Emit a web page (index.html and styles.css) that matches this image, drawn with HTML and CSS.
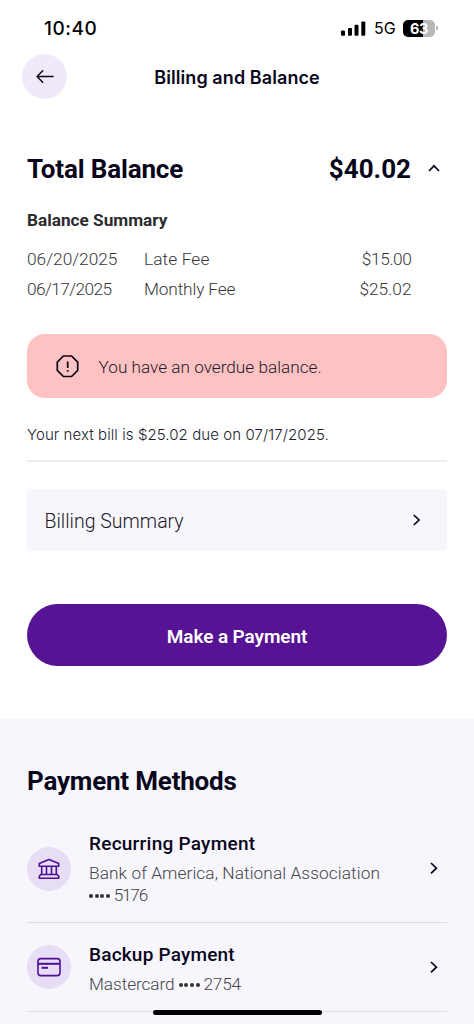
FILE: index.html
```html
<!DOCTYPE html>
<html lang="en">
<head>
<meta charset="utf-8">
<title>Billing and Balance</title>
<link rel="stylesheet" href="styles.css">
</head>
<body>
<div class="screen">
  <div class="status">
    <span class="time">10:40</span>
    <div class="indicators">
      <svg class="signal" width="25" height="15" viewBox="0 0 25 15"><rect x="0" y="9.5" width="4" height="5.2" rx="1"/><rect x="7" y="7" width="4" height="7.7" rx="1"/><rect x="13.5" y="3.8" width="4" height="10.9" rx="1"/><rect x="20.3" y="0.5" width="4" height="14.2" rx="1"/></svg>
      <span class="network">5G</span>
      <div class="battery"><span class="charge">63</span></div>
      <svg class="tip" width="3" height="6" viewBox="0 0 3 6"><path d="M0 0.5Q2.4 1.2 2.4 3T0 5.5Z"/></svg>
    </div>
  </div>
  <header class="nav">
    <button class="back" aria-label="Back"><svg width="20" height="16" viewBox="0 0 20 16"><path d="M18 7.5H2M7.7 1.8L2 7.5L7.7 13.2"/></svg></button>
    <h1 class="title">Billing and Balance</h1>
  </header>
  <main class="balance">
    <div class="total">
      <h2 class="heading total-label">Total Balance</h2>
      <span class="heading amount">$40.02</span>
      <svg class="caret" width="14" height="10" viewBox="0 0 14 10"><path d="M2 7L7 1.8L12 7"/></svg>
    </div>
    <h3 class="subheading">Balance Summary</h3>
    <div class="fees">
      <div class="fee"><span class="date">06/20/2025</span><span class="name late">Late Fee</span><span class="price narrow">$15.00</span></div>
      <div class="fee"><span class="date narrower">06/17/2025</span><span class="name monthly">Monthly Fee</span><span class="price">$25.02</span></div>
    </div>
    <div class="alert">
      <svg width="24" height="24" viewBox="0 0 24 24"><path d="M7.4 2H15.6L21.7 8.1V16.4L15.6 22.5H7.4L1.3 16.4V8.1Z"/><path d="M11.7 7.5V14M11.7 16V17.7"/></svg>
      <span>You have an overdue balance.</span>
    </div>
    <p class="next">Your next bill is $25.02 due on 07/17/2025.</p>
    <div class="summary"><span>Billing Summary</span><svg width="10" height="14" viewBox="0 0 10 14"><path d="M1.8 2L7 7L1.8 12"/></svg></div>
    <button class="pay">Make a Payment</button>
  </main>
  <section class="methods">
    <h2 class="heading methods-title">Payment Methods</h2>
    <div class="method recurring">
      <div class="icon"><svg width="24" height="24" viewBox="0 0 24 24"><path d="M2.3 9.2V6.5L12 2.5L21.7 6.5V9.2ZM4.7 9.2V17.5M9.5 9.2V17.5M14.5 9.2V17.5M19.3 9.2V17.5M2.3 21.3V19.3L3.8 17.5H20.2L21.7 19.3V21.3Z"/></svg></div>
      <div class="detail"><h3 class="kind">Recurring Payment</h3><p class="info"><span class="bank">Bank of America, National Association</span><br><b class="dots"><i></i><i></i><i></i><i></i></b><span class="num account">5176</span></p></div>
      <svg class="go" width="10" height="14" viewBox="0 0 10 14"><path d="M2 2L7.4 7.2L2 12.4"/></svg>
    </div>
    <div class="method backup">
      <div class="icon"><svg width="24" height="24" viewBox="0 0 24 24"><rect x="1" y="3.6" width="22" height="17" rx="2.8"/><path class="stripe" d="M1 8.8H23"/><path class="stripe" d="M4.5 12.8H11"/></svg></div>
      <div class="detail"><h3 class="kind">Backup Payment</h3><p class="info"><span class="card">Mastercard</span> <b class="dots"><i></i><i></i><i></i><i></i></b><span class="num">2754</span></p></div>
      <svg class="go" width="10" height="14" viewBox="0 0 10 14"><path d="M2 2L7.4 7.2L2 12.4"/></svg>
    </div>
  </section>
  <div class="home-bar"></div>
</div>
</body>
</html>
```
FILE: styles.css
```css
* { box-sizing: border-box; margin: 0; padding: 0; }
body { background: #fff; color: #09061c; font-family: Roboto, "Liberation Sans", sans-serif; }
button { border: 0; font: inherit; }
svg { display: block; flex: none; }
path { fill: none; stroke: #09061c; stroke-width: 1.7; }
.screen { position: relative; width: 474px; height: 1024px; overflow: hidden; display: flex; flex-direction: column; }
.status { height: 54px; padding: 16px 36px 14px 44px; display: flex; justify-content: space-between; align-items: center; font-family: Inter, sans-serif; color: #000; }
.time { font-size: 19px; font-weight: 500; letter-spacing: 0.5px; }
.indicators { display: flex; align-items: center; }
.signal { margin-right: 8px; }
.network { font-size: 16px; width: 29px; }
.battery { width: 32px; height: 17px; border-radius: 5px; background: linear-gradient(90deg, #000 63%, #b8b8b8 63%); color: #fff; text-align: center; font-size: 14.5px; font-weight: 700; line-height: 17px; letter-spacing: -0.3px; }
.tip { margin: 0 -1px 0 1px; }
.tip path { stroke: none; fill: #b8b8b8; }
.nav { height: 45px; padding: 0 22px; display: grid; grid-template-columns: 44px 1fr 44px; }
.back { width: 45px; height: 45px; border-radius: 50%; background: #f0eaf8; display: grid; place-items: center; }
.back path { stroke-width: 1.5; stroke-linecap: round; stroke-linejoin: round; }
.title { font: 600 18px/47px Inter, sans-serif; text-align: center; letter-spacing: 0.08px; }
.balance { height: 620px; padding: 52px 27px 0; }
.heading { font-size: 26px; font-weight: 700; line-height: 36px; white-space: nowrap; letter-spacing: -0.15px; }
.total { height: 36px; display: flex; align-items: center; }
.total-label { flex: 1; }
.amount { letter-spacing: 0; }
.caret { margin: 0 6px 0 16px; }
.subheading { margin-top: 21px; font-size: 17.2px; line-height: 24px; color: #2b2b2f; }
.fees { margin-top: 12px; color: #353538; font-size: 17.3px; font-weight: 300; }
.fee { height: 30px; line-height: 31px; display: grid; grid-template-columns: 117px 1fr auto; padding-right: 35.5px; }
.narrow { letter-spacing: -0.4px; }
.narrower { letter-spacing: -0.6px; }
.late { letter-spacing: 0.12px; }
.monthly { letter-spacing: -0.15px; }
.alert { margin-top: 30px; height: 64px; border-radius: 18px; background: #ffc2c2; padding: 0 28.5px; display: flex; align-items: center; gap: 19px; font-size: 17.2px; font-weight: 300; color: #201a2c; }
.alert span { padding-top: 2px; }
.next { height: 64px; line-height: 73px; border-bottom: 2px solid #ececee; font-family: Inter, sans-serif; font-size: 15px; font-weight: 350; letter-spacing: 0.08px; color: #201c2d; }
.summary { margin-top: 27px; height: 62px; border-radius: 4px; background: #f7f6fc; padding: 0 25px 0 17.5px; display: flex; align-items: center; justify-content: space-between; font-size: 19.5px; font-weight: 300; color: #1d1a29; }
.summary span { padding-top: 3px; }
.pay { margin-top: 53px; width: 420px; height: 62px; border-radius: 31px; background: #561393; color: #fff; font-size: 19px; font-weight: 600; line-height: 65px; letter-spacing: -0.1px; }
.methods { flex: 1; background: #f7f6fc; padding: 44px 27px 0; }
.methods-title { letter-spacing: -0.2px; }
.method { display: flex; align-items: center; border-bottom: 1px solid #dddce3; }
.recurring { height: 107px; margin-top: 17px; padding-bottom: 2px; }
.recurring .detail { padding-bottom: 2px; }
.recurring .kind { letter-spacing: 0.25px; }
.backup { height: 89px; }
.icon { width: 44px; height: 44px; border-radius: 50%; background: #e7def6; display: grid; place-items: center; }
.icon path, .icon rect { fill: none; stroke: #4d1094; stroke-width: 1.6; stroke-linejoin: round; }
.icon .stripe { stroke-width: 2; }
.detail { flex: 1; margin-left: 18px; }
.kind { font-size: 19px; font-weight: 500; line-height: 32px; letter-spacing: 0.2px; }
.info { font-size: 17.3px; font-weight: 300; line-height: 21.5px; color: #444448; margin-top: 3px; white-space: nowrap; }
.bank { letter-spacing: 0.07px; }
.card { letter-spacing: -0.1px; }
.dots { display: inline-flex; gap: 1.6px; vertical-align: 3px; margin-right: 4px; }
.dots i { width: 4px; height: 4px; border-radius: 50%; background: #303035; }
.num { letter-spacing: -0.3px; }
.account { letter-spacing: -1.3px; }
.go { margin-right: 8px; }
.recurring .icon { margin-top: 1px; }
.home-bar { position: absolute; left: 153px; top: 1010px; width: 169px; height: 5px; border-radius: 3px; background: #000; }
```
